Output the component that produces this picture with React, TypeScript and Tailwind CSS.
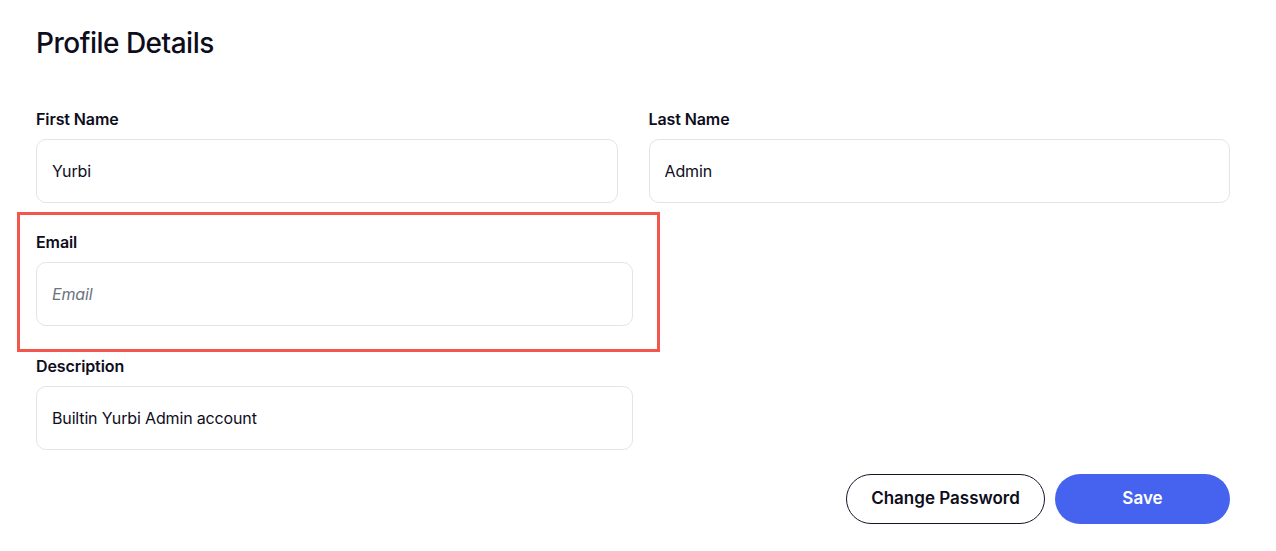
import React from "react";

function Field({
  label,
  value,
  placeholder,
  className,
}: {
  label: string;
  value?: string;
  placeholder?: string;
  className?: string;
}) {
  return (
    <div className={className}>
      <label className="block text-[16px] leading-6 font-semibold text-[#0d0d1c] mb-[8px] tracking-[-0.1px]">
        {label}
      </label>
      <input
        type="text"
        defaultValue={value}
        placeholder={placeholder}
        className="block w-full h-[64px] rounded-[10px] border border-[#e4e4e7] bg-white px-[15px] text-[16px] leading-6 text-[#0d0d1c] tracking-[-0.15px] outline-none placeholder:italic placeholder:text-[#6b7280]"
      />
    </div>
  );
}

export default function App() {
  return (
    <div
      className="w-full h-[551px] bg-white overflow-hidden pl-[36px] pt-[25px]"
      style={{ fontFamily: "Inter, 'Noto Sans', sans-serif" }}
    >
      <div className="w-[1194px]">
        <h1 className="text-[28px] leading-9 font-medium text-[#0d0d1c] tracking-[-0.5px]">
          Profile Details
        </h1>

        <div className="mt-[46px] grid grid-cols-2 gap-[31px]">
          <Field label="First Name" value="Yurbi" />
          <Field label="Last Name" value="Admin" />
        </div>

        <div className="mt-[9px] -ml-[19px] w-[643px] border-[3px] border-[#f2564c] pt-[15px] pb-[23px] pl-[16px]">
          <Field label="Email" placeholder="Email" className="w-[597px]" />
        </div>

        <Field
          label="Description"
          value="Builtin Yurbi Admin account"
          className="w-[597px] mt-[2px]"
        />

        <div className="mt-[24px] flex justify-end gap-[10px]">
          <button className="h-[50px] w-[199px] rounded-full border border-[#14142b] bg-white text-[17px] font-semibold text-[#0d0d1c]">
            Change Password
          </button>
          <button className="h-[50px] w-[175px] rounded-full bg-[#4563ee] text-[17px] font-semibold text-white">
            Save
          </button>
        </div>
      </div>
    </div>
  );
}
